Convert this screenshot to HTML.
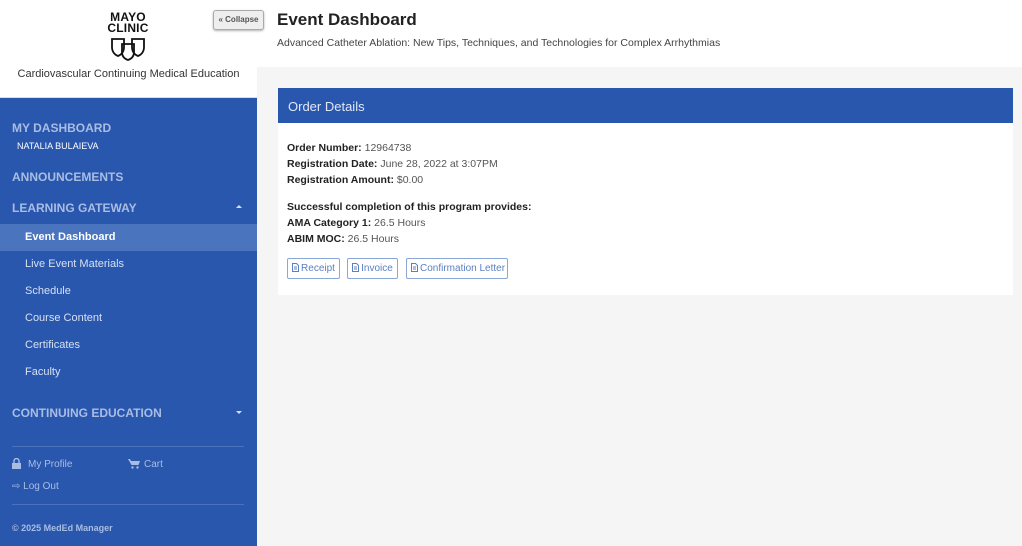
<!DOCTYPE html>
<html><head><meta charset="utf-8">
<style>
*{box-sizing:border-box;margin:0;padding:0}
body{width:1022px;height:546px;overflow:hidden;font-family:"Liberation Sans",sans-serif;background:#f5f5f5;position:relative}
#side{position:absolute;left:0;top:0;width:257px;height:546px;background:#2957ae}
#logo{position:absolute;left:0;top:0;width:257px;height:98px;background:#fff;border-bottom:1px solid #ddd}
.mayo{position:absolute;left:98px;top:12px;width:60px;text-align:center;font-weight:bold;font-size:12px;line-height:11px;color:#111;letter-spacing:.2px}
.cme{position:absolute;left:0;width:257px;top:68px;text-align:center;font-size:11px;color:#333}
#coll{position:absolute;left:213px;top:10px;width:51px;height:20px;border:1px solid #aaa;border-radius:3px;background:#eee;font-size:8px;color:#555;text-align:center;line-height:18px;font-weight:bold;box-shadow:0 1px 2px rgba(0,0,0,.3);z-index:3}
.h{position:absolute;left:12px;font-weight:bold;font-size:12px;color:#a9bde3}
.sub{position:absolute;left:25px;font-size:11px;color:#d5e0f3}
.act{position:absolute;left:0;top:224px;width:257px;height:27px;background:#4a74bd}
.car{position:absolute;left:236px;width:0;height:0;border-left:3.5px solid transparent;border-right:3.5px solid transparent}
.hr{position:absolute;left:12px;width:232px;border-top:1px solid #4a72bd}
.ft{position:absolute;font-size:10px;color:#a9bde3}
#top{position:absolute;left:257px;top:0;width:765px;height:67px;background:#fff}
h1{position:absolute;left:277px;top:10px;font-size:17px;color:#222}
.subt{position:absolute;left:277px;top:37px;font-size:10.5px;color:#444}
#card{position:absolute;left:278px;top:88px;width:735px;height:207px;background:#fff}
#ch{height:35px;background:#2957ae;color:#e0e8f7;font-size:13px;padding:11px 10px}
.l{position:absolute;left:9px;font-size:10.5px;color:#555}
.l b{color:#222}
.btn{position:absolute;top:170px;height:21px;border:1px solid #8aa7d8;border-radius:2px;font-size:10px;color:#5b7fc4;line-height:19px;padding:0 4px;white-space:nowrap;text-align:center}
.btn svg{vertical-align:-1px;margin-right:2px}
</style></head><body>
<div id="side">
<div id="logo">
<div class="mayo">MAYO<br>CLINIC</div>
<svg style="position:absolute;left:110px;top:37px" width="36" height="24" viewBox="0 0 36 24" fill="none" stroke="#111" stroke-width="1.8"><path d="M2 2h12v8c0 5-3 8-6 9c-3-1-6-4-6-9z"/><path d="M22 2h12v8c0 5-3 8-6 9c-3-1-6-4-6-9z"/><path d="M12 7h12v8c0 5-3 7-6 8c-3-1-6-3-6-8z"/></svg>
<div class="cme">Cardiovascular Continuing Medical Education</div>
</div>
<div class="h" style="top:121px">MY DASHBOARD</div>
<div style="position:absolute;left:17px;top:141px;font-size:9px;color:#fff">NATALIA BULAIEVA</div>
<div class="h" style="top:170px">ANNOUNCEMENTS</div>
<div class="h" style="top:201px">LEARNING GATEWAY</div>
<div class="car" style="top:205px;border-bottom:3.5px solid #d5e0f3"></div>
<div class="act"></div>
<div class="sub" style="top:231px;color:#fff;font-weight:bold">Event Dashboard</div>
<div class="sub" style="top:258px">Live Event Materials</div>
<div class="sub" style="top:285px">Schedule</div>
<div class="sub" style="top:312px">Course Content</div>
<div class="sub" style="top:339px">Certificates</div>
<div class="sub" style="top:366px">Faculty</div>
<div class="h" style="top:406px">CONTINUING EDUCATION</div>
<div class="car" style="top:411px;border-top:3.5px solid #d5e0f3"></div>
<div class="hr" style="top:446px"></div>
<svg style="position:absolute;left:12px;top:458px" width="9" height="11" viewBox="0 0 9 11" fill="#a9bde3"><rect x="0" y="5" width="9" height="6"/><path d="M2 5V3a2.5 2.5 0 015 0v2" fill="none" stroke="#a9bde3" stroke-width="1.4"/></svg>
<div class="ft" style="left:28px;top:459px">My Profile</div>
<svg style="position:absolute;left:128px;top:459px" width="12" height="10" viewBox="0 0 12 10" fill="#a9bde3"><path d="M0 0h2l1 2h9l-1.5 4H3.5z"/><circle cx="4.5" cy="8.5" r="1.2"/><circle cx="9.5" cy="8.5" r="1.2"/></svg>
<div class="ft" style="left:144px;top:459px">Cart</div>
<div class="ft" style="left:12px;top:481px">⇨ Log Out</div>
<div class="hr" style="top:504px"></div>
<div class="ft" style="left:12px;top:523px;font-size:9px;font-weight:bold">© 2025 MedEd Manager</div>
</div>
<div id="coll">« Collapse</div>
<div id="top"></div>
<h1>Event Dashboard</h1>
<div class="subt">Advanced Catheter Ablation: New Tips, Techniques, and Technologies for Complex Arrhythmias</div>
<div id="card">
<div id="ch">Order Details</div>
<div class="l" style="top:54px"><b>Order Number:</b> 12964738</div>
<div class="l" style="top:70px"><b>Registration Date:</b> June 28, 2022 at 3:07PM</div>
<div class="l" style="top:86px"><b>Registration Amount:</b> $0.00</div>
<div class="l" style="top:113px"><b>Successful completion of this program provides:</b></div>
<div class="l" style="top:129px"><b>AMA Category 1:</b> 26.5 Hours</div>
<div class="l" style="top:145px"><b>ABIM MOC:</b> 26.5 Hours</div>
<div class="btn" style="left:9px;width:53px"><svg width="7" height="9" viewBox="0 0 7 9" fill="none" stroke="#5b7fc4"><path d="M.5.5h4l2 2v6h-6z M2 4h3M2 6h3"/></svg>Receipt</div>
<div class="btn" style="left:69px;width:51px"><svg width="7" height="9" viewBox="0 0 7 9" fill="none" stroke="#5b7fc4"><path d="M.5.5h4l2 2v6h-6z M2 4h3M2 6h3"/></svg>Invoice</div>
<div class="btn" style="left:128px;width:102px"><svg width="7" height="9" viewBox="0 0 7 9" fill="none" stroke="#5b7fc4"><path d="M.5.5h4l2 2v6h-6z M2 4h3M2 6h3"/></svg>Confirmation Letter</div>
</div>
</body></html>
